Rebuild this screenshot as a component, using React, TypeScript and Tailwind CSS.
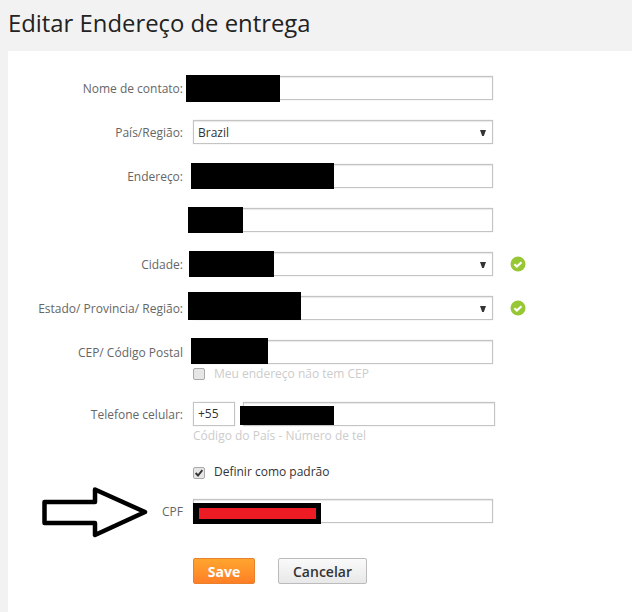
import React from 'react';

const inputBox = 'h-6 w-[300px] border border-[#c4c4c4] bg-white shadow-[inset_0_1px_1px_#e8e8e8,0_0_1px_#ccc]';

const Redact = ({ className }: { className: string }) => (
    <div className={`absolute bg-black ${className}`} />
);

const Row = ({ label, className, children }: { label: string; className: string; children: React.ReactNode }) => (
    <div className={`flex items-center ${className}`}>
        <div className="h-6 w-[175px] pt-px text-right text-[12px] leading-6 text-[#666]">{label}</div>
        <div className="relative ml-[10px] flex items-center">{children}</div>
    </div>
);

const Arrow = () => (
    <svg viewBox="0 0 6 6" className="h-[6px] w-[6px]">
        <path d="M0 0h6L3.8 6H2.2z" fill="#333" />
    </svg>
);

const SelectBox = ({ text }: { text?: string }) => (
    <div className={`${inputBox} flex items-center justify-between pl-1 pr-[6px] pt-px text-[12px] text-[#333]`}>
        <span>{text}</span>
        <Arrow />
    </div>
);

const Check = () => (
    <svg viewBox="0 0 16 16" className="ml-[17px] h-4 w-4">
        <circle cx="8" cy="8" r="7.5" fill="#97c735" />
        <path d="M4.4 8.2l2.5 2.4 4.6-4.4" fill="none" stroke="#fff" strokeWidth="2.2" />
    </svg>
);

const CheckBox = ({ checked }: { checked?: boolean }) => (
    <div className="flex h-3 w-3 items-center justify-center rounded-[2px] border border-[#aaa] bg-[#e6e6e6]">
        {checked && (
            <svg viewBox="0 0 12 12" className="h-[10px] w-[10px]">
                <path d="M2 6l2.8 3L10 2.5" fill="none" stroke="#333" strokeWidth="2.2" />
            </svg>
        )}
    </div>
);

export default function App() {
    return (
        <div className="h-[612px] w-[632px] overflow-hidden bg-[#f2f2f2] font-['Open_Sans',sans-serif]">
            <h1 className="pl-2 pt-[6px] text-[23.85px] leading-[34px] text-[#222]">Editar Endereço de entrega</h1>

            <div className="relative ml-2 mt-[11px] h-[561px] bg-white pt-[25px]">
                <Row label="Nome de contato:" className="">
                    <div className={inputBox} />
                    <Redact className="left-[-7px] top-[-1px] h-[27px] w-[94px]" />
                </Row>

                <Row label="País/Região:" className="mt-5">
                    <SelectBox text="Brazil" />
                </Row>

                <Row label="Endereço:" className="mt-5">
                    <div className={inputBox} />
                    <Redact className="left-[-2px] top-[-1px] h-[26px] w-[143px]" />
                </Row>

                <Row label="" className="mt-5">
                    <div className={inputBox} />
                    <Redact className="left-[-5px] top-[-1px] h-[26px] w-[55px]" />
                </Row>

                <Row label="Cidade:" className="mt-5">
                    <SelectBox />
                    <Check />
                    <Redact className="left-[-4px] top-[-1px] h-[26px] w-[85px]" />
                </Row>

                <Row label="Estado/ Provincia/ Região:" className="mt-5">
                    <SelectBox />
                    <Check />
                    <Redact className="left-[-5px] top-[-4px] h-[28px] w-[113px]" />
                </Row>

                <Row label="CEP/ Código Postal" className="mt-5">
                    <div className={inputBox} />
                    <Redact className="left-[-2px] top-[-2px] h-[26px] w-[77px]" />
                </Row>

                <div className="ml-[185px] mt-px flex h-[18px] items-center gap-[9px] text-[12px] text-[#ccc]">
                    <CheckBox />
                    <span>Meu endereço não tem CEP</span>
                </div>

                <Row label="Telefone celular:" className="mt-[19px]">
                    <div className="h-6 w-[42px] border border-[#c4c4c4] bg-white pl-1 pt-px text-[12px] leading-5 text-[#333] shadow-[0_0_1px_#ccc]">+55</div>
                    <div className="ml-2 h-6 w-[252px] border border-[#c4c4c4] bg-white shadow-[inset_0_1px_1px_#e8e8e8,0_0_1px_#ccc]" />
                    <Redact className="left-[47px] top-[4px] h-[19px] w-[94px]" />
                </Row>

                <div className="ml-[185px] mt-[1px] text-[12px] leading-[18px] text-[#ccc]">Código do País - Número de tel</div>

                <div className="ml-[185px] mt-[19px] flex h-[18px] items-center gap-[9px] text-[12px] text-[#333]">
                    <CheckBox checked />
                    <span className="-mt-[2px]">Definir como padrão</span>
                </div>

                <Row label="CPF" className="mt-[17px]">
                    <div className={inputBox} />
                    <div className="absolute left-0 top-1 flex h-[21px] w-[128px] items-center justify-center bg-black">
                        <div className="h-[11px] w-[117px] bg-[#ed1c24]" />
                    </div>
                </Row>

                <svg viewBox="0 0 110 52" className="absolute left-[33px] top-[436px] h-[52px] w-[110px]">
                    <path d="M3.5 15H54V2.5L104 25 54 48V36H3.5z" fill="#fff" stroke="#000" strokeWidth="4.5" strokeLinejoin="round" />
                </svg>

                <div className="ml-[185px] mt-[35px] flex items-start gap-[23px]">
                    <button className="h-[26px] w-[62px] rounded-[2px] border border-[#e8802c] bg-gradient-to-b from-[#ffa52e] to-[#ff7f27] text-[14px] font-bold text-white">Save</button>
                    <button className="h-[26px] w-[89px] rounded-[2px] border border-[#bbb] bg-gradient-to-b from-[#fafafa] to-[#e8e8e8] text-[14px] font-semibold text-[#333]">Cancelar</button>
                </div>
            </div>
        </div>
    );
}
